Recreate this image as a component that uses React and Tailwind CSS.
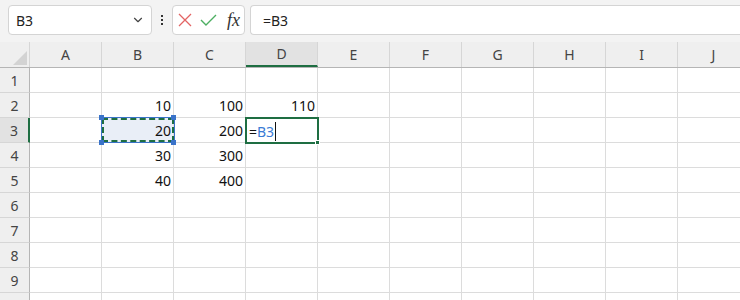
import React from 'react';
import { ChevronDown } from 'lucide-react';

const cols = ['A', 'B', 'C', 'D', 'E', 'F', 'G', 'H', 'I', 'J'];
const rows = [1, 2, 3, 4, 5, 6, 7, 8, 9, 10];

const data = {
  2: { B: '10', C: '100', D: '110' },
  3: { B: '20', C: '200' },
  4: { B: '30', C: '300' },
  5: { B: '40', C: '400' },
};

const font = { fontFamily: '"Noto Sans", "Noto Sans CJK JP", sans-serif' };

const Toolbar = () => (
  <div className="h-[42px] flex items-start pt-[5px] pl-[8px] bg-[#f3f3f3]">
    {/* Name box */}
    <div className="w-[144px] h-[30px] bg-white border border-[#d4d4d4] rounded-[4px] flex items-center pl-[7px] pr-[6px]">
      <span className="flex-1 text-[14px] text-[#222]">B3</span>
      <ChevronDown size={14} strokeWidth={2} className="text-[#444]" />
    </div>
    {/* Vertical dots */}
    <div className="w-[20px] h-[30px] flex flex-col items-center justify-center gap-[2px]">
      <span className="w-[2px] h-[2px] bg-[#333]" />
      <span className="w-[2px] h-[2px] bg-[#333]" />
      <span className="w-[2px] h-[2px] bg-[#333]" />
    </div>
    {/* Cancel / enter / fx */}
    <div className="w-[73px] h-[30px] bg-white border border-[#d4d4d4] rounded-[4px] flex items-center pl-[5px]">
      <svg width="14" height="16" viewBox="0 0 14 16">
        <path d="M1 2 L13 14 M13 2 L1 14" stroke="#e36464" strokeWidth="1.3" fill="none" />
      </svg>
      <svg className="ml-[8px]" width="17" height="16" viewBox="0 0 17 16">
        <path d="M1 8 L6 13 L16 3" stroke="#4daf62" strokeWidth="1.4" fill="none" />
      </svg>
      <span className="ml-[10px] text-[18px] leading-none italic text-[#333]" style={{ fontFamily: '"Liberation Serif", serif' }}>
        fx
      </span>
    </div>
    {/* Formula bar */}
    <div className="ml-[5px] flex-1 h-[30px] bg-white border border-r-0 border-[#d4d4d4] rounded-l-[4px] flex items-center pl-[12px]">
      <span className="text-[14px] text-[#222]">=B3</span>
    </div>
  </div>
);

const HeaderRow = () => (
  <div className="flex h-[26px] bg-[#efefef] border-b border-[#b5b5b5]">
    <div className="w-[30px] shrink-0 border-r border-[#d6d6d6] relative">
      <svg className="absolute right-[2px] bottom-[2px]" width="14" height="14" viewBox="0 0 14 14">
        <path d="M14 0 L14 14 L0 14 Z" fill="#d3d3d3" />
      </svg>
    </div>
    {cols.map((c) => (
      <div
        key={c}
        className={`w-[72px] shrink-0 border-r border-[#d6d6d6] flex items-center justify-center text-[14px] text-[#444] ${
          c === 'D' ? 'bg-[#e2e2e2] border-b-2 border-b-[#1e6e42]' : ''
        }`}
      >
        {c}
      </div>
    ))}
  </div>
);

const Row = ({ r }) => (
  <div className="flex h-[25px]">
    <div
      className={`w-[30px] shrink-0 flex items-center justify-center text-[14px] text-[#444] border-b border-[#d6d6d6] ${
        r === 3 ? 'bg-[#e2e2e2] border-r-2 border-r-[#1e6e42]' : 'bg-[#efefef] border-r border-r-[#b5b5b5]'
      }`}
    >
      {r}
    </div>
    {cols.map((c) => {
      const v = data[r] && data[r][c];
      const isB3 = r === 3 && c === 'B';
      const isD3 = r === 3 && c === 'D';
      return (
        <div
          key={c}
          className={`w-[72px] shrink-0 border-r border-b border-[#dcdcdc] flex items-center justify-end pr-[2px] pt-[1px] text-[14px] text-[#111] relative ${
            isB3 ? 'bg-[#e9eef7] z-10' : 'bg-white'
          } ${isD3 ? 'z-10' : ''}`}
        >
          {v}
          {isB3 && (
            <>
              <div className="absolute -left-[1px] -top-[1px] w-[74px] h-[26px] border border-[#3a73c9]" />
              <div className="absolute left-0 top-0 w-[72px] h-[24px] border-2 border-dashed border-[#1e6e42]" />
              <span className="absolute -left-[3px] -top-[3px] w-[5px] h-[5px] bg-[#3a73c9]" />
              <span className="absolute -right-[3px] -top-[3px] w-[5px] h-[5px] bg-[#3a73c9]" />
              <span className="absolute -left-[3px] -bottom-[3px] w-[5px] h-[5px] bg-[#3a73c9]" />
              <span className="absolute -right-[3px] -bottom-[3px] w-[5px] h-[5px] bg-[#3a73c9]" />
            </>
          )}
          {isD3 && (
            <>
              <div className="absolute -left-[1px] -top-[1px] w-[74px] h-[27px] border-2 border-[#1e6e42] flex items-center pl-[2px] pt-[1px]">
                <span className="text-[#111]">=</span>
                <span className="text-[#3a7bd5]">B3</span>
                <span className="ml-[1px] w-[1px] h-[19px] bg-[#111]" />
              </div>
              <span className="absolute -right-[3px] -bottom-[3px] w-[5px] h-[5px] bg-[#1e6e42] border border-white" />
            </>
          )}
        </div>
      );
    })}
  </div>
);

export default function App() {
  return (
    <div className="w-[740px] h-[300px] overflow-hidden bg-white" style={font}>
      <Toolbar />
      <div className="w-[760px]">
        <HeaderRow />
        {rows.map((r) => (
          <Row key={r} r={r} />
        ))}
      </div>
    </div>
  );
}
